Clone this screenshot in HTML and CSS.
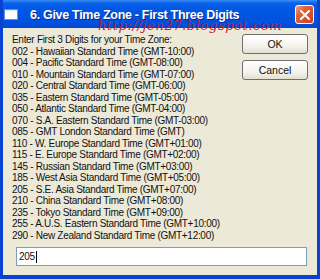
FILE: index.html
```html
<!DOCTYPE html>
<html>
<head>
<meta charset="utf-8">
<link rel="stylesheet" href="styles.css">
</head>
<body>
<div class="window">
  <div class="titlebar">
    <div class="appicon"></div>
    <div class="title">6. Give Time Zone - First Three Digits</div>
    <div class="close">
      <svg width="10" height="10" viewBox="0 0 10 10"><path d="M1 1 L9 9 M9 1 L1 9" stroke="#fff" stroke-width="2" stroke-linecap="square"/></svg>
    </div>
  </div>
  <div class="client">
    <div class="list">
      <div>Enter First 3 Digits for your Time Zone:</div>
      <div>002 - Hawaiian Standard Time (GMT-10:00)</div>
      <div>004 - Pacific Standard Time (GMT-08:00)</div>
      <div>010 - Mountain Standard Time (GMT-07:00)</div>
      <div>020 - Central Standard Time (GMT-06:00)</div>
      <div>035 - Eastern Standard Time (GMT-05:00)</div>
      <div>050 - Atlantic Standard Time (GMT-04:00)</div>
      <div>070 - S.A. Eastern Standard Time (GMT-03:00)</div>
      <div>085 - GMT London Standard Time (GMT)</div>
      <div>110 - W. Europe Standard Time (GMT+01:00)</div>
      <div>115 - E. Europe Standard Time (GMT+02:00)</div>
      <div>145 - Russian Standard Time (GMT+03:00)</div>
      <div>185 - West Asia Standard Time (GMT+05:00)</div>
      <div>205 - S.E. Asia Standard Time (GMT+07:00)</div>
      <div>210 - China Standard Time (GMT+08:00)</div>
      <div>235 - Tokyo Standard Time (GMT+09:00)</div>
      <div>255 - A.U.S. Eastern Standard Time (GMT+10:00)</div>
      <div>290 - New Zealand Standard Time (GMT+12:00)</div>
    </div>
    <div class="buttons">
      <div class="btn">OK</div>
      <div class="btn">Cancel</div>
    </div>
    <div class="input">205<span class="caret"></span></div>
  </div>
  <div class="watermark">http://jen27.blogspot.com</div>
</div>
</body>
</html>
```
FILE: styles.css
```css
html, body {
  margin: 0;
  padding: 0;
  background: #ffffff;
}
.window {
  position: relative;
  width: 320px;
  height: 279px;
  box-sizing: border-box;
  display: flex;
  flex-direction: column;
  background: #0a46d8;
  border-left: 3px solid #0842d0;
  border-right: 3px solid #0842d0;
  border-bottom: 4px solid #0842d0;
  overflow: hidden;
}
.titlebar {
  height: 28px;
  margin: 0 -3px;
  display: flex;
  align-items: center;
  background: linear-gradient(#3d8ef5 0px, #0a62e8 3px, #0058e6 9px, #0055e2 55%, #0050dc 85%, #0446d0 100%);
  flex-shrink: 0;
}
.appicon {
  width: 12px;
  height: 8px;
  margin-left: 5px;
  margin-top: 1px;
  background: #ffffff;
  border-top: 1px solid #dfe8f8;
  box-shadow: 0 0 0 1px rgba(255,255,255,0.35);
}
.title {
  margin-left: 13px;
  font-family: "Liberation Sans", Arial, sans-serif;
  font-weight: bold;
  font-size: 12.5px;
  letter-spacing: -0.3px;
  color: #ffffff;
  text-shadow: 1px 1px 0 #0a2a8a;
  flex: 1;
  padding-top: 2px;
}
.close {
  width: 17px;
  height: 17px;
  margin-right: 6px;
  margin-top: 1px;
  border: 1px solid #ffffff;
  border-radius: 3px;
  background: linear-gradient(135deg, #f0a080 0%, #e0603a 35%, #cc4020 100%);
  display: flex;
  align-items: center;
  justify-content: center;
}
.client {
  flex: 1;
  background: #ece9d8;
  display: grid;
  grid-template-columns: 1fr 66px;
  grid-template-rows: 1fr auto;
  padding: 6px 9px 9px 9px;
  column-gap: 8px;
}
.list {
  font-family: "Liberation Sans", Arial, sans-serif;
  font-size: 10px;
  letter-spacing: -0.3px;
  line-height: 11.5px;
  color: #111111;
  white-space: nowrap;
}
.buttons {
  display: flex;
  flex-direction: column;
  gap: 6px;
  padding-top: 0px;
}
.btn {
  height: 20px;
  box-sizing: border-box;
  border: 1px solid #6f6f6f;
  border-radius: 3px;
  background: linear-gradient(#ffffff 0%, #f4f3ee 60%, #e2dfd4 100%);
  display: flex;
  align-items: center;
  justify-content: center;
  font-family: "Liberation Sans", Arial, sans-serif;
  font-size: 10.5px;
  color: #111111;
}
.input {
  grid-column: 1 / 3;
  margin: 0 1px 0 4px;
  height: 19px;
  box-sizing: border-box;
  border: 1px solid #7f9db9;
  background: #ffffff;
  font-family: "Liberation Sans", Arial, sans-serif;
  font-size: 10px;
  letter-spacing: -0.3px;
  line-height: 17px;
  padding-left: 2px;
  color: #111111;
  display: flex;
  align-items: center;
}
.caret {
  display: inline-block;
  width: 1px;
  height: 12px;
  background: #000000;
  margin-left: 1px;
}
.watermark {
  position: absolute;
  left: 95px;
  top: 18px;
  font-family: "DejaVu Serif", serif;
  font-style: italic;
  font-size: 13px;
  letter-spacing: 0.6px;
  color: #b8203a;
  white-space: nowrap;
}
```
